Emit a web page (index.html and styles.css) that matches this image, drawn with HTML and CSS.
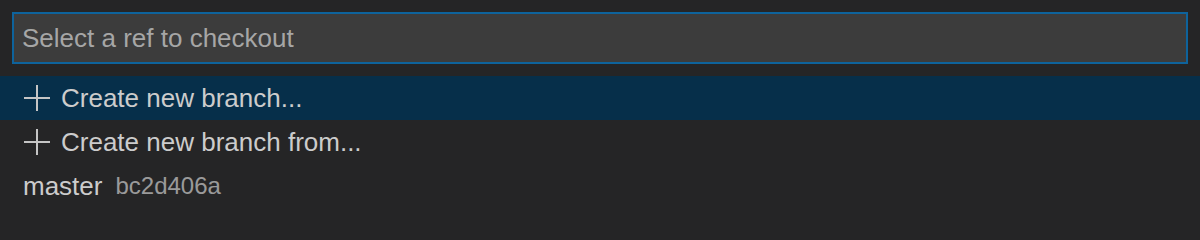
FILE: index.html
```html
<!DOCTYPE html>
<html>
<head>
<meta charset="utf-8">
<link rel="stylesheet" href="styles.css">
</head>
<body>
<div class="quick-input">
  <div class="header">
    <div class="input-box">
      <input class="input" type="text" placeholder="Select a ref to checkout">
    </div>
  </div>
  <div class="list">
    <div class="row focused">
      <svg class="icon" width="26" height="26" viewBox="0 0 26 26"><path d="M13 0V26M0 13H26" stroke="#c5c5c5" stroke-width="2" fill="none"/></svg>
      <span class="label">Create new branch...</span>
    </div>
    <div class="row">
      <svg class="icon" width="26" height="26" viewBox="0 0 26 26"><path d="M13 0V26M0 13H26" stroke="#c5c5c5" stroke-width="2" fill="none"/></svg>
      <span class="label">Create new branch from...</span>
    </div>
    <div class="row ref">
      <span class="label">master</span>
      <span class="desc">bc2d406a</span>
    </div>
  </div>
</div>
</body>
</html>
```

FILE: styles.css
```css
html, body {
  margin: 0;
  padding: 0;
  background: #252526;
  width: 1200px;
  height: 220px;
  overflow: hidden;
}

.quick-input {
  font-family: "Liberation Sans", Arial, sans-serif;
  color: #cccccc;
}

.header {
  padding: 12px 12px 12px 12px;
}

.input-box {
  height: 52px;
  box-sizing: border-box;
  border: 2px solid #0e639c;
  background: #3c3c3c;
  display: flex;
  align-items: center;
}

.input {
  flex: 1;
  border: none;
  outline: none;
  background: transparent;
  color: #cccccc;
  font-family: "Liberation Sans", Arial, sans-serif;
  font-size: 26px;
  padding: 0 0 0 8px;
  height: 100%;
}

.input::placeholder {
  color: #a6a6a6;
}

.row {
  height: 44px;
  display: flex;
  align-items: center;
  padding-left: 24px;
  font-size: 26px;
  white-space: nowrap;
}

.row.focused {
  background: #062f4a;
}

.row.ref {
  padding-left: 23px;
}

.icon {
  flex: none;
  margin-right: 11px;
}

.desc {
  font-size: 24px;
  margin-left: 13px;
  opacity: 0.7;
}
```
